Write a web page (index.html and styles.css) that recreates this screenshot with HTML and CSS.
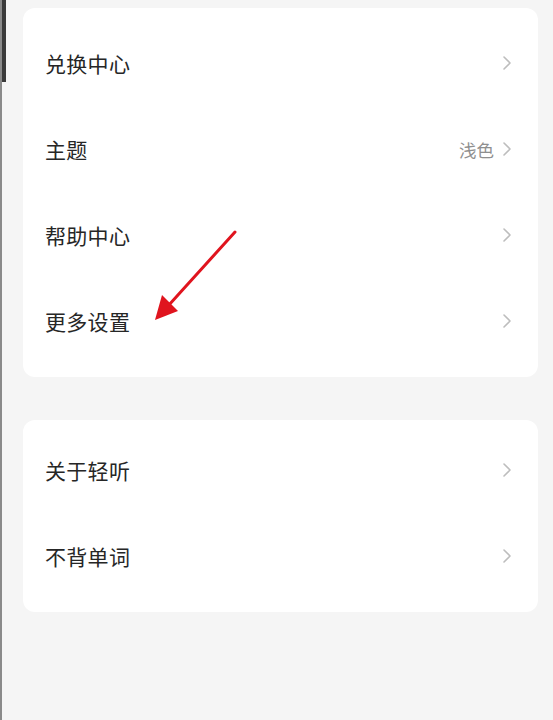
FILE: index.html
```html
<!DOCTYPE html>
<html lang="zh-CN">
<head>
<meta charset="utf-8">
<title>设置</title>
<link rel="stylesheet" href="styles.css">
</head>
<body>
<div class="screen">
  <div class="card card-top">
    <div class="row"><span class="label">兑换中心</span><span class="right"><svg class="chev" viewBox="0 0 10 16"><path d="M2 2 L8 8 L2 14"/></svg></span></div>
    <div class="row"><span class="label">主题</span><span class="right"><span class="value">浅色</span><svg class="chev" viewBox="0 0 10 16"><path d="M2 2 L8 8 L2 14"/></svg></span></div>
    <div class="row"><span class="label">帮助中心</span><span class="right"><svg class="chev" viewBox="0 0 10 16"><path d="M2 2 L8 8 L2 14"/></svg></span></div>
    <div class="row"><span class="label">更多设置</span><span class="right"><svg class="chev" viewBox="0 0 10 16"><path d="M2 2 L8 8 L2 14"/></svg></span></div>
  </div>
  <div class="card card-bottom">
    <div class="row"><span class="label">关于轻听</span><span class="right"><svg class="chev" viewBox="0 0 10 16"><path d="M2 2 L8 8 L2 14"/></svg></span></div>
    <div class="row"><span class="label">不背单词</span><span class="right"><svg class="chev" viewBox="0 0 10 16"><path d="M2 2 L8 8 L2 14"/></svg></span></div>
  </div>
  <svg class="arrow" viewBox="0 0 553 720" width="553" height="720">
    <line x1="235" y1="232" x2="168" y2="306" />
    <polygon points="155,320 162,295 178,311" />
  </svg>
</div>
</body>
</html>
```
FILE: styles.css
```css
html, body {
  margin: 0;
  padding: 0;
}
body {
  background: #f5f5f5;
  font-family: "Noto Sans CJK SC", "Noto Sans", sans-serif;
}
.screen {
  position: relative;
  width: 553px;
  height: 720px;
  box-sizing: border-box;
  border-left: 2px solid #8a8a8a;
  padding: 8px 15px 0 21px;
  display: flex;
  flex-direction: column;
  gap: 43px;
  overflow: hidden;
}
.screen::before {
  content: "";
  position: absolute;
  left: -2px;
  top: 0;
  width: 6px;
  height: 82px;
  background: #3a3a3a;
}
.card {
  background: #ffffff;
  border-radius: 12px;
  display: flex;
  flex-direction: column;
}
.card-top {
  padding: 12px 0 13px;
}
.card-bottom {
  padding: 7px 0 13px;
}
.row {
  height: 86px;
  display: flex;
  align-items: center;
  justify-content: space-between;
  padding: 0 26px 0 22px;
}
.label {
  font-size: 21px;
  color: #262626;
  letter-spacing: 0.3px;
}
.right {
  display: flex;
  align-items: center;
  gap: 8px;
}
.value {
  font-size: 17.5px;
  color: #8f8f8f;
}
.chev {
  width: 10px;
  height: 16px;
}
.chev path {
  fill: none;
  stroke: #bdbdbd;
  stroke-width: 1.6;
  stroke-linecap: round;
  stroke-linejoin: round;
}
.arrow {
  position: absolute;
  left: -2px;
  top: 0;
  pointer-events: none;
}
.arrow line {
  stroke: #e0141e;
  stroke-width: 3;
  stroke-linecap: round;
}
.arrow polygon {
  fill: #e0141e;
}
```
